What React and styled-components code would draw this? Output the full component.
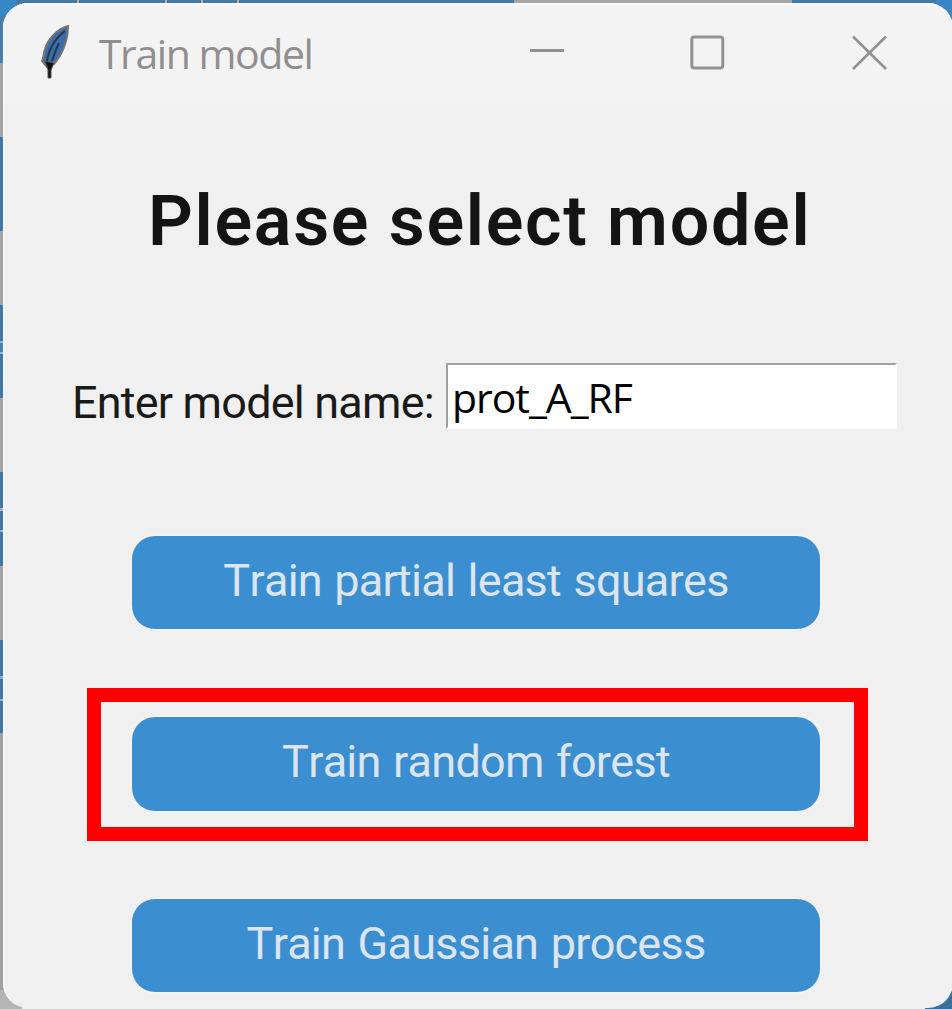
import React from "react";
import styled, { createGlobalStyle } from "styled-components";

const GlobalStyle = createGlobalStyle`
  * { box-sizing: border-box; }
  body { margin: 0; overflow: hidden; }
`;

const Desktop = styled.div`
  width: 952px;
  height: 1009px;
  padding: 2.6px 0 1px 2.6px;
  overflow: hidden;
  background:
    linear-gradient(#3986c6, #3986c6) 0 0 / 16px 16px no-repeat,
    linear-gradient(#3986c6, #3986c6) 936px 0 / 16px 30px no-repeat,
    linear-gradient(#38709f, #38709f) 925px 980px / 27px 29px no-repeat,
    linear-gradient(90deg, #4279a6 77px, #c9a9a0 77px 79px, #4279a6 79px 165px, #c9a9a0 165px 167px, #4279a6 167px 201px, #c9a9a0 201px 203px, #4279a6 203px 237px, #c9a9a0 237px 239px, #4279a6 239px 514px, #a6a6a6 514px 792px, #4279a6 792px) 0 0 / 952px 3px no-repeat,
    linear-gradient(#b5b5b5, #b5b5b5) 0 990px / 22px 19px no-repeat,
    linear-gradient(#f0f0f0, #f0f0f0) 22px 1000px / 908px 9px no-repeat,
    linear-gradient(#4a7ea9 63px, #a5a3a3 63px 137px, #4178a5 137px 231px, #a5a3a3 231px 305px, #4178a5 305px 341px, #9db4c6 341px 343px, #4583b5 343px 352px, #9db4c6 352px 354px, #4178a5 354px 398px, #a5a3a3 398px 472px, #4178a5 472px 508px, #a9b4bc 508px 511px, #4178a5 511px 530px, #a9b4bc 530px 532px, #4178a5 532px 566px, #a5a3a3 566px 640px, #4178a5 640px 676px, #8fb0c0 676px 679px, #4178a5 679px 699px, #a9b4bc 699px 701px, #4178a5 701px 733px, #a0a0a0 733px);
`;

const Window = styled.section`
  width: 950px;
  height: 1005.4px;
  display: flex;
  flex-direction: column;
  overflow: hidden;
  border-radius: 25px;
  background: #f0f0f0;
  box-shadow: inset 1.5px 1px 0 #f8f8f8;
`;

const TitleBar = styled.header`
  flex: none;
  height: 101.4px;
  display: flex;
  align-items: flex-start;
  padding-left: 37.4px;
  background: #f3f3f3;
  box-shadow: inset 1px 2px 0 #fbfbfb;
`;

const Feather = styled.svg`
  width: 32px;
  height: 58px;
  margin-top: 21.4px;
`;

const Caption = styled.span`
  width: 424px;
  margin: 20.4px 0 0 27px;
  font: 400 41px/60px "Open Sans", sans-serif;
  letter-spacing: -1.45px;
  color: #8f8f8f;
  white-space: nowrap;
`;

const Controls = styled.div`
  display: flex;
  gap: 124px;
  padding: 31.4px 0 0 6px;
`;

const ControlIcon = styled.svg`
  width: 37px;
  height: 37px;
  fill: none;
  stroke: #929292;
  stroke-width: 3;
`;

const Body = styled.main`
  flex: 1;
  display: flex;
  flex-direction: column;
`;

const Heading = styled.h1`
  width: 100%;
  margin: 77px 0 0;
  padding-left: 145.4px;
  font: 600 70px/80px Roboto, sans-serif;
  letter-spacing: 1.7px;
  word-spacing: -0.5px;
  color: #141414;
  white-space: nowrap;
`;

const Field = styled.label`
  display: flex;
  align-items: flex-start;
  margin-top: 102px;
  padding-left: 69.4px;
`;

const FieldName = styled.span`
  width: 374px;
  padding-top: 10px;
  font: 400 45px/60px Roboto, sans-serif;
  letter-spacing: -0.8px;
  color: #1a1a1a;
  white-space: nowrap;
`;

const Entry = styled.input`
  width: 451px;
  height: 66px;
  padding: 2px 0 0 4px;
  border: 2px solid #fff;
  border-top-color: #a0a0a0;
  border-left-color: #a0a0a0;
  border-radius: 0;
  outline: 0;
  background: #fff;
  font: 400 41px "Open Sans", sans-serif;
  letter-spacing: -1.05px;
  color: #000;
`;

const Actions = styled.div`
  display: flex;
  flex-direction: column;
  margin-top: 74px;
  padding-left: 84.4px;
`;

const Slot = styled.div`
  width: 781px;
  height: 153px;
  flex: none;
  display: flex;
  justify-content: center;
  align-items: center;
  margin-bottom: 28.4px;
  padding: 0 3px 2px 0;
  border: 14px solid ${(p) => (p.$marked ? "#ff0000" : "transparent")};
`;

const TrainButton = styled.button`
  width: 688px;
  height: 93.5px;
  padding: 0 0 3px;
  border: 0;
  border-radius: 23px;
  background: #3b8ed0;
  box-shadow: 0 0 0 1.5px #f7f4f2;
  font: 400 45px/60px Roboto, sans-serif;
  font-kerning: none;
  letter-spacing: -0.75px;
  word-spacing: 2px;
  color: #dce4ee;
  white-space: nowrap;
`;

const actions = [
  { label: "Train partial least squares" },
  { label: "Train random forest", marked: true },
  { label: "Train Gaussian process" },
];

export default function App() {
  return (
    <Desktop>
      <GlobalStyle />
      <Window>
        <TitleBar>
          <Feather viewBox="0 0 32 58">
            <path d="M28 2C17 5 8 15 5 25C3 31 4 34 2 37L7 43L14 40C22 31 28 17 28 2Z" fill="#3b6da8" stroke="#77736e" strokeWidth="2" />
            <path d="M25 7C14 15 8 27 7 38M19 19C16 25 14 31 12 37" fill="none" stroke="#26364a" strokeWidth="2" />
            <path d="M5 37L14 39L11 46V54H8V46Z" fill="#111" stroke="#555" strokeWidth="1" />
          </Feather>
          <Caption>Train model</Caption>
          <Controls>
            <ControlIcon viewBox="0 0 37 37"><path d="M1 16.5H35" /></ControlIcon>
            <ControlIcon viewBox="0 0 37 37"><rect x="1.8" y="3" width="31" height="31" rx="2.5" /></ControlIcon>
            <ControlIcon viewBox="0 0 37 37"><path d="M2 2.5L35 35M35 2.5L2 35" strokeWidth="2.6" /></ControlIcon>
          </Controls>
        </TitleBar>
        <Body>
          <Heading>Please select model</Heading>
          <Field>
            <FieldName>Enter model name:</FieldName>
            <Entry defaultValue="prot_A_RF" />
          </Field>
          <Actions>
            {actions.map((a) => (
              <Slot key={a.label} $marked={a.marked}>
                <TrainButton type="button">{a.label}</TrainButton>
              </Slot>
            ))}
          </Actions>
        </Body>
      </Window>
    </Desktop>
  );
}
